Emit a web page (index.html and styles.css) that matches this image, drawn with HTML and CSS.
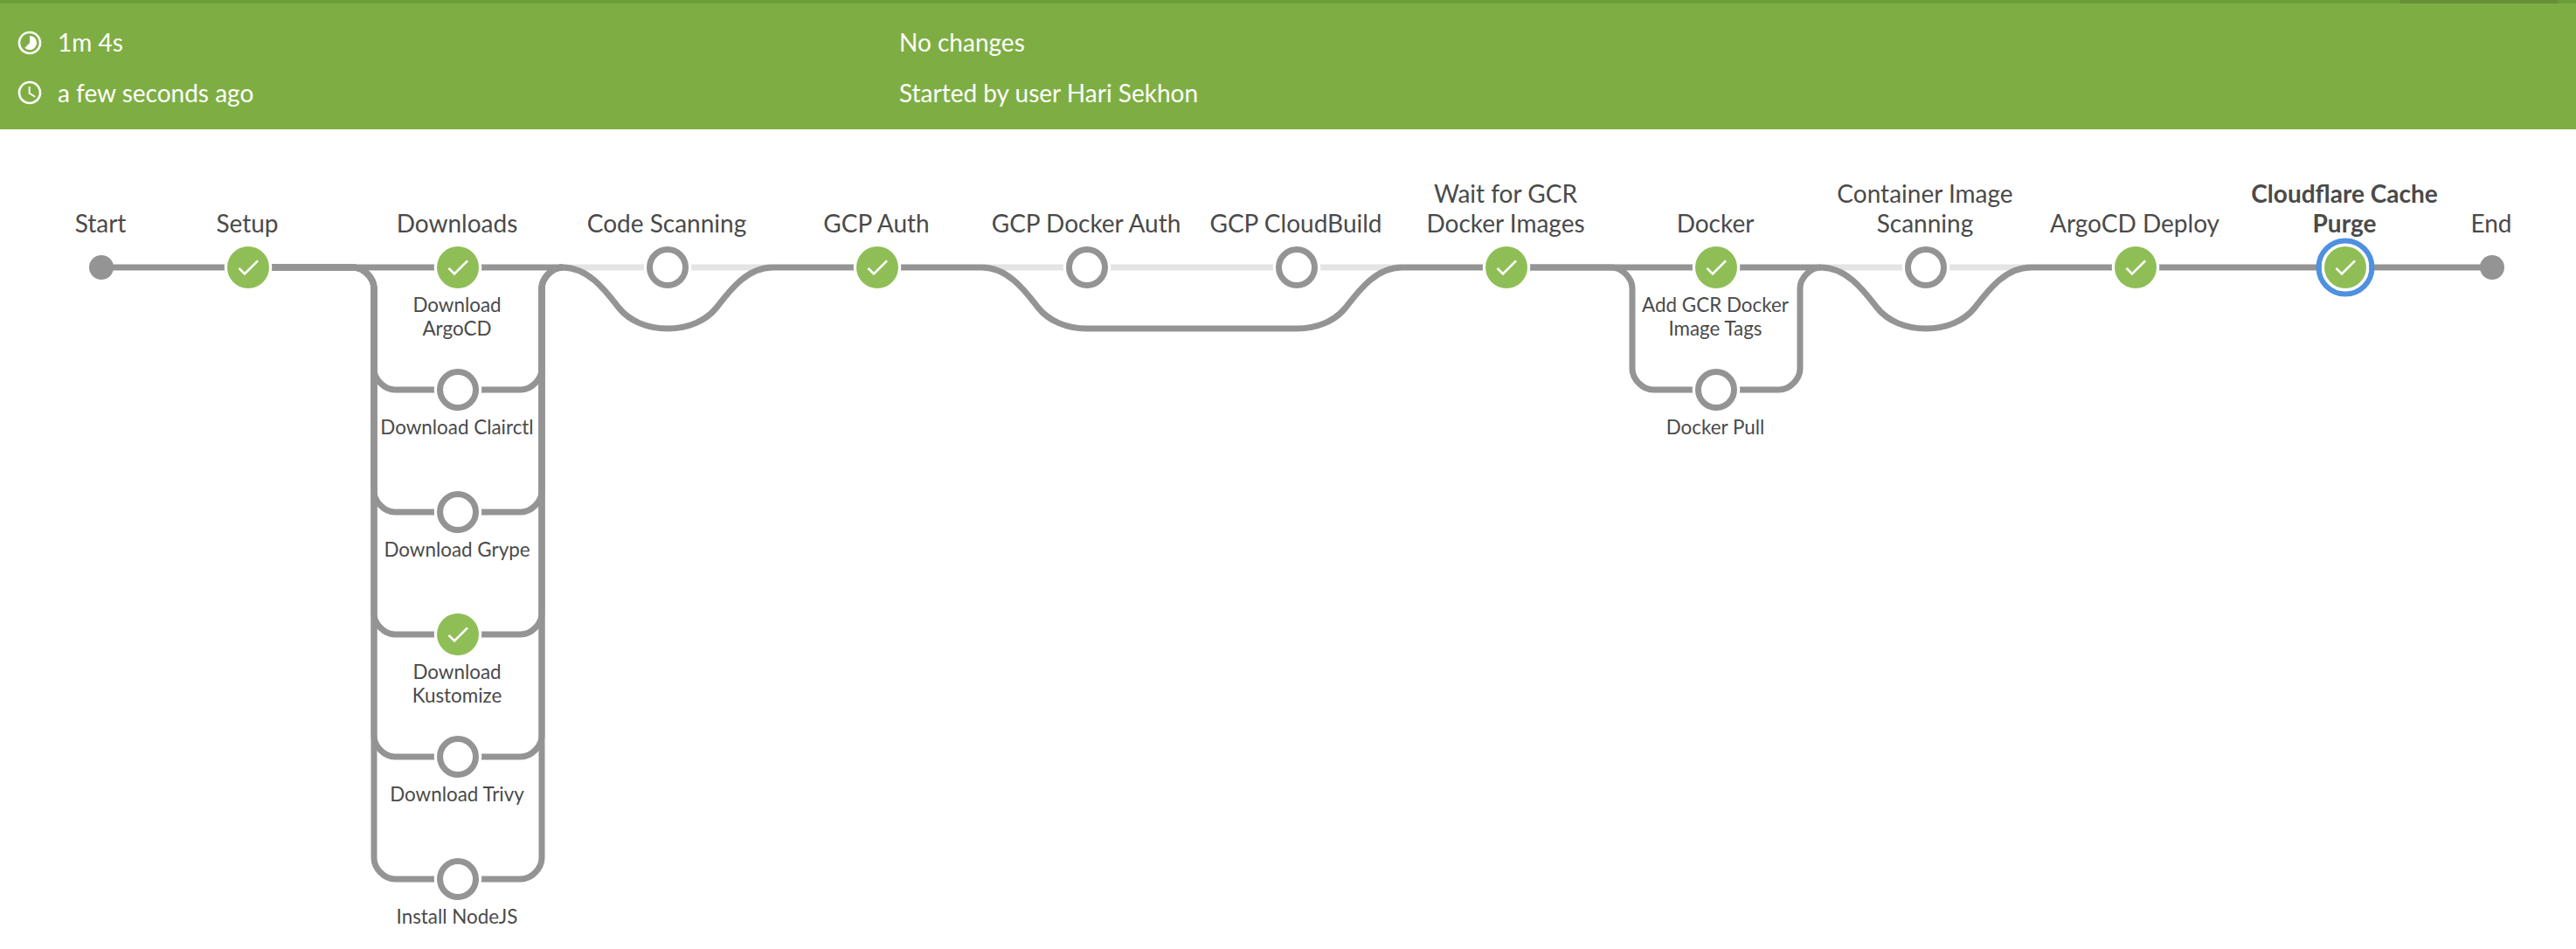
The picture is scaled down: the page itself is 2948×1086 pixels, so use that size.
FILE: index.html
```html
<!DOCTYPE html>
<html lang="en">
<head>
<meta charset="utf-8">
<title>Pipeline run</title>
<link rel="stylesheet" href="styles.css">
</head>
<body>
<header class="run-header">
  <div class="tab-strip"><span class="tab-active"></span></div>
  <div class="run-details">
    <div class="run-column">
      <div class="run-row">
        <svg class="run-icon" viewBox="0 0 24 24"><path d="M16.24 7.76C15.07 6.59 13.54 6 12 6v6l-4.24 4.24c2.34 2.34 6.14 2.34 8.49 0 2.34-2.34 2.34-6.14-.01-8.48zM12 2C6.48 2 2 6.48 2 12s4.48 10 10 10 10-4.48 10-10S17.52 2 12 2zm0 18c-4.42 0-8-3.58-8-8s3.58-8 8-8 8 3.58 8 8-3.58 8-8 8z"/></svg>
        <span>1m 4s</span>
      </div>
      <div class="run-row">
        <svg class="run-icon" viewBox="0 0 24 24"><path d="M11.99 2C6.47 2 2 6.48 2 12s4.47 10 9.99 10C17.52 22 22 17.52 22 12S17.52 2 11.99 2zM12 20c-4.42 0-8-3.58-8-8s3.58-8 8-8 8 3.58 8 8-3.58 8-8 8zm.5-13H11v6l5.25 3.15.75-1.23-4.5-2.67z"/></svg>
        <span>a few seconds ago</span>
      </div>
    </div>
    <div class="run-column">
      <div class="run-row"><span>No changes</span></div>
      <div class="run-row"><span>Started by user Hari Sekhon</span></div>
    </div>
  </div>
</header>
<main class="graph">
  <svg class="graph-lines" viewBox="0 148 2948 938">
    <defs>
      <g id="success">
        <circle class="node-gap" r="27.25"/>
        <circle class="node-success" r="24"/>
        <path class="node-check" transform="scale(1.3333) translate(-12 -12)" d="M9 16.2 4.8 12l-1.4 1.4L9 19 21 7l-1.4-1.4z"/>
      </g>
      <g id="skipped">
        <circle class="node-gap" r="27.25"/>
        <circle class="node-skipped" r="20.5"/>
      </g>
    </defs>
    <g class="line-skipped">
      <path d="M644 306H884M1124 306H1604M2084 306H2324"/>
    </g>
    <g class="line">
      <path d="M116 306H284"/>
      <path d="M284 306H524"/>
      <path d="M524 306H644"/>
      <!-- Downloads branches -->
      <path d="M284 306H404c12 0 24 12 24 24V422c0 12 12 24 24 24H596c12 0 24-12 24-24V330c0-12 12-24 24-24"/>
      <path d="M284 306H404c12 0 24 12 24 24V562c0 12 12 24 24 24H596c12 0 24-12 24-24V330c0-12 12-24 24-24"/>
      <path d="M284 306H404c12 0 24 12 24 24V702c0 12 12 24 24 24H596c12 0 24-12 24-24V330c0-12 12-24 24-24"/>
      <path d="M284 306H404c12 0 24 12 24 24V842c0 12 12 24 24 24H596c12 0 24-12 24-24V330c0-12 12-24 24-24"/>
      <path d="M284 306H404c12 0 24 12 24 24V982c0 12 12 24 24 24H596c12 0 24-12 24-24V330c0-12 12-24 24-24"/>
      <!-- Around Code Scanning -->
      <path d="M644 306c30 0 50 28 64 46c12 15 32 24 56 24c24 0 44-9 56-24c14-18 34-46 64-46H1004"/>
      <!-- Around the GCP build stages -->
      <path d="M1004 306H1124c30 0 50 28 64 46c12 15 32 24 56 24H1484c24 0 44-9 56-24c14-18 34-46 64-46H1724"/>
      <path d="M1724 306H1964"/>
      <path d="M1964 306H2084"/>
      <!-- Docker branch -->
      <path d="M1724 306H1844c12 0 24 12 24 24V422c0 12 12 24 24 24H2036c12 0 24-12 24-24V330c0-12 12-24 24-24"/>
      <!-- Around Container Image Scanning -->
      <path d="M2084 306c30 0 50 28 64 46c12 15 32 24 56 24c24 0 44-9 56-24c14-18 34-46 64-46H2444"/>
      <path d="M2444 306H2684"/>
      <path d="M2684 306H2852"/>
    </g>
    <circle class="node-terminal" cx="116" cy="306" r="14"/>
    <circle class="node-terminal" cx="2852" cy="306" r="14"/>
    <use href="#success" x="284" y="306"/>
    <use href="#success" x="524" y="306"/>
    <use href="#skipped" x="524" y="446"/>
    <use href="#skipped" x="524" y="586"/>
    <use href="#success" x="524" y="726"/>
    <use href="#skipped" x="524" y="866"/>
    <use href="#skipped" x="524" y="1006"/>
    <use href="#skipped" x="764" y="306"/>
    <use href="#success" x="1004" y="306"/>
    <use href="#skipped" x="1244" y="306"/>
    <use href="#skipped" x="1484" y="306"/>
    <use href="#success" x="1724" y="306"/>
    <use href="#success" x="1964" y="306"/>
    <use href="#skipped" x="1964" y="446"/>
    <use href="#skipped" x="2204" y="306"/>
    <use href="#success" x="2444" y="306"/>
    <use href="#success" x="2684" y="306"/>
    <circle class="node-selected" cx="2684" cy="306" r="30.5"/>
  </svg>

  <div class="stage" style="left:115px">Start</div>
  <div class="stage" style="left:283px">Setup</div>
  <div class="stage" style="left:523px">Downloads</div>
  <div class="stage" style="left:763px">Code Scanning</div>
  <div class="stage" style="left:1003px">GCP Auth</div>
  <div class="stage" style="left:1243px">GCP Docker Auth</div>
  <div class="stage" style="left:1483px">GCP CloudBuild</div>
  <div class="stage" style="left:1723px">Wait for GCR<br>Docker Images</div>
  <div class="stage" style="left:1963px">Docker</div>
  <div class="stage" style="left:2203px">Container Image<br>Scanning</div>
  <div class="stage" style="left:2443px">ArgoCD Deploy</div>
  <div class="stage stage-selected" style="left:2683px">Cloudflare Cache<br>Purge</div>
  <div class="stage" style="left:2851px">End</div>

  <div class="step" style="left:523px;top:187px">Download<br>ArgoCD</div>
  <div class="step" style="left:523px;top:327px">Download Clairctl</div>
  <div class="step" style="left:523px;top:467px">Download Grype</div>
  <div class="step" style="left:523px;top:607px">Download<br>Kustomize</div>
  <div class="step" style="left:523px;top:747px">Download Trivy</div>
  <div class="step" style="left:523px;top:887px">Install NodeJS</div>
  <div class="step" style="left:1963px;top:187px">Add GCR Docker<br>Image Tags</div>
  <div class="step" style="left:1963px;top:327px">Docker Pull</div>
</main>
</body>
</html>
```
FILE: styles.css
```css
* { box-sizing: border-box; }

body {
  margin: 0;
  background: #fff;
  color: #4a4a4a;
  font-family: Lato, sans-serif;
}

.run-header {
  height: 148px;
  background: #7eae43;
  color: #fff;
}

.tab-strip {
  display: flex;
  justify-content: flex-end;
  height: 4px;
  padding-right: 21px;
  background: #6d9d39;
}

.tab-active {
  width: 180px;
  background: #668f36;
}

.run-details {
  display: grid;
  grid-template-columns: 1011px 1fr;
  padding: 29px 18px 0;
}

.run-column {
  display: flex;
  flex-direction: column;
  gap: 25px;
}

.run-row {
  display: flex;
  align-items: center;
  gap: 16px;
  height: 32px;
  font-size: 28px;
  line-height: 34px;
  white-space: nowrap;
}

.run-row:first-child span { margin-bottom: 2px; }

.run-icon {
  width: 32px;
  height: 32px;
  fill: #fff;
}

.graph {
  position: relative;
  height: 938px;
}

.graph-lines {
  display: block;
  width: 2948px;
  height: 938px;
}

.line, .line-skipped {
  fill: none;
  stroke: #949494;
  stroke-width: 7;
}

.line-skipped { stroke: #e4e4e4; }

.node-gap { fill: #fff; }
.node-success { fill: #8fbe57; }
.node-check { fill: #fff; }
.node-skipped { fill: #fff; stroke: #949494; stroke-width: 7; }
.node-terminal { fill: #949494; }
.node-selected { fill: none; stroke: #4e91e0; stroke-width: 6; }

.stage {
  position: absolute;
  bottom: 814px;
  transform: translateX(-50%);
  font-size: 28px;
  line-height: 34px;
  text-align: center;
  white-space: nowrap;
}

.stage-selected { font-weight: 700; }

.step {
  position: absolute;
  transform: translateX(-50%);
  font-size: 22.4px;
  line-height: 27px;
  text-align: center;
  white-space: nowrap;
}
```
